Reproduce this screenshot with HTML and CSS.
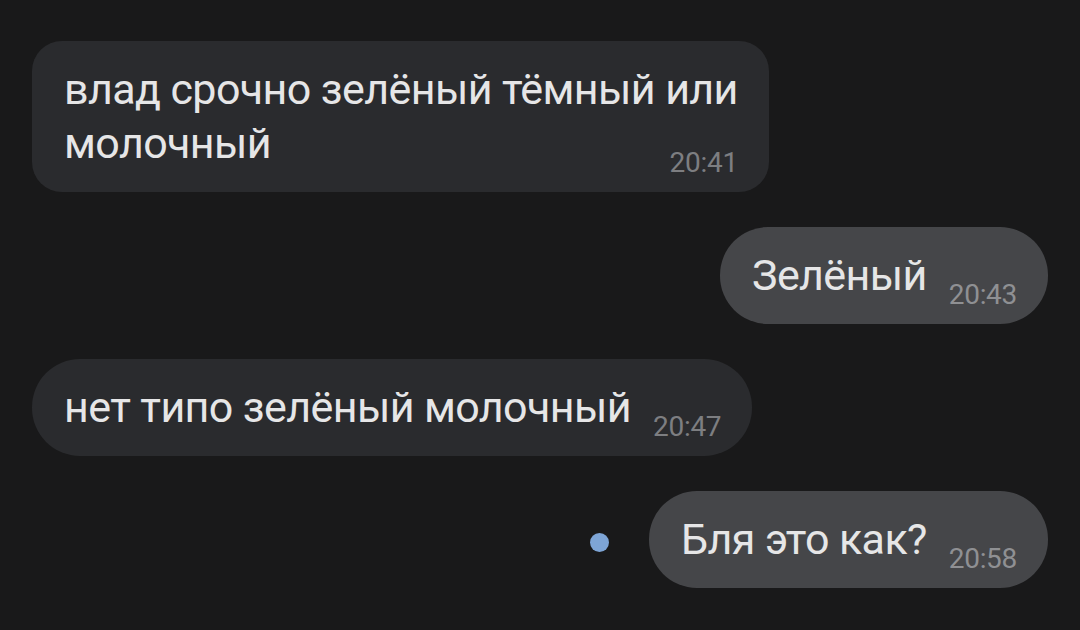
FILE: index.html
```html
<!DOCTYPE html>
<html lang="ru">

<head>
    <meta charset="utf-8" />
    <meta name="viewport" content="width=device-width, initial-scale=1.0" />
    <title>Чат</title>
    <link rel="stylesheet" href="styles.css">
</head>

<body>
    <div class="chat">
        <div class="row in">
            <div class="bubble multi">
                <span class="text">влад срочно зелёный тёмный или<br>молочный</span>
                <span class="time">20:41</span>
            </div>
        </div>

        <div class="row out">
            <div class="bubble">
                <span class="text">Зелёный</span>
                <span class="time">20:43</span>
            </div>
        </div>

        <div class="row in">
            <div class="bubble">
                <span class="text">нет типо зелёный молочный</span>
                <span class="time">20:47</span>
            </div>
        </div>

        <div class="row out">
            <span class="unread-dot"></span>
            <div class="bubble">
                <span class="text">Бля это как?</span>
                <span class="time">20:58</span>
            </div>
        </div>
    </div>
</body>

</html>
```

FILE: styles.css
```css
html {
    font-family: Roboto, "Noto Sans", sans-serif;
    color: #e6e6e7;
}

body {
    margin: 0;
    background: #19191a;
}

.chat {
    display: flex;
    flex-direction: column;
    gap: 35px;
    padding: 41px 32px;
}

.row {
    display: flex;
    align-items: center;
}

.row.in {
    justify-content: flex-start;
}

.row.out {
    justify-content: flex-end;
}

.bubble {
    box-sizing: border-box;
    max-width: 760px;
    padding: 21px 31px 22px 32px;
    border-radius: 48px;
    font-size: 43px;
    line-height: 54px;
    letter-spacing: -0.6px;
}

.bubble.multi {
    border-radius: 30px;
}

.in .bubble {
    background: #2a2b2e;
}

.out .bubble {
    background: #454649;
}

.time {
    float: right;
    margin: 33px 0 -7px 22px;
    font-size: 28px;
    line-height: 28px;
    letter-spacing: -0.3px;
}

.in .time {
    color: #7d7e81;
}

.out .time {
    color: #8f9093;
}

.unread-dot {
    width: 19px;
    height: 19px;
    margin: 6px 40px 0 0;
    border-radius: 50%;
    background: #7ea5d6;
}
```
